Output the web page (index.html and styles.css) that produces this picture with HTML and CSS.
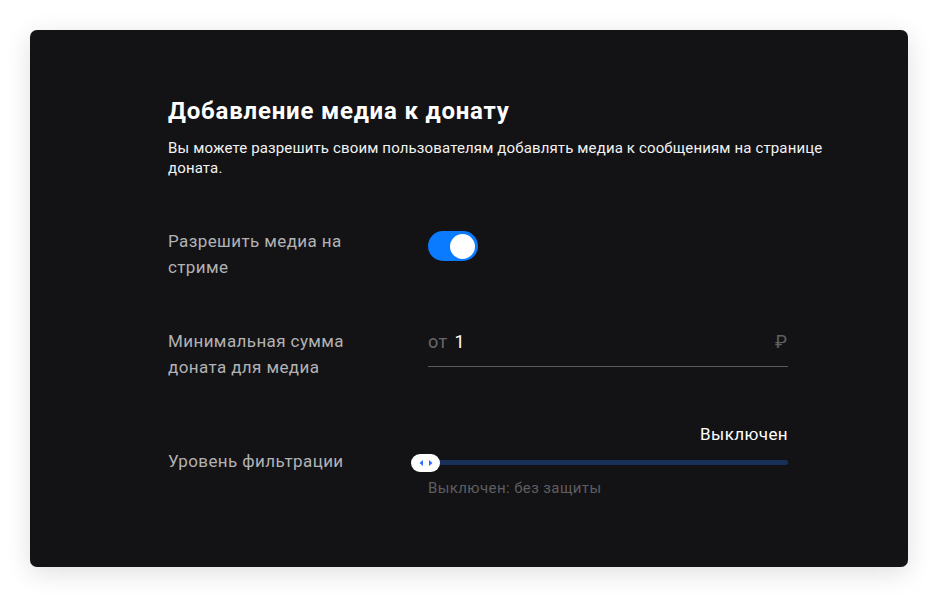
FILE: index.html
```html
<!DOCTYPE html>
<html lang="ru">
<head>
<meta charset="utf-8">
<title>Добавление медиа к донату</title>
<link rel="stylesheet" href="styles.css">
</head>
<body>
<div class="card">
  <div class="content">
    <h1 class="title">Добавление медиа к донату</h1>
    <p class="desc">Вы можете разрешить своим пользователям добавлять медиа к сообщениям на странице доната.</p>

    <div class="row row-toggle">
      <div class="label">Разрешить медиа на стриме</div>
      <div class="control">
        <div class="toggle"><div class="knob"></div></div>
      </div>
    </div>

    <div class="row row-input">
      <div class="label">Минимальная сумма доната для медиа</div>
      <div class="control">
        <div class="input">
          <span class="prefix">от</span>
          <span class="value">1</span>
          <span class="currency">₽</span>
        </div>
      </div>
    </div>

    <div class="row row-slider">
      <div class="label label-slider">Уровень фильтрации</div>
      <div class="control">
        <div class="slider-value">Выключен</div>
        <div class="slider">
          <div class="track"></div>
          <div class="thumb">
            <svg width="16" height="8" viewBox="0 0 16 8">
              <path d="M5 1 L1.5 4 L5 7 Z" fill="#2f6bff"/>
              <path d="M11 1 L14.5 4 L11 7 Z" fill="#2f6bff"/>
            </svg>
          </div>
        </div>
        <div class="hint">Выключен: без защиты</div>
      </div>
    </div>
  </div>
</div>
</body>
</html>
```

FILE: styles.css
```css
* { box-sizing: border-box; }
html, body { margin: 0; padding: 0; background: #ffffff; }
body {
  font-family: Roboto, "Noto Sans", "Liberation Sans", sans-serif;
  padding: 30px;
}
.card {
  width: 878px;
  height: 537px;
  background: #131315;
  border-radius: 7px;
  box-shadow: 0 6px 26px rgba(0, 0, 0, 0.13);
  padding: 65.8px 60px 0 138px;
}
.content { width: 680px; }
.title {
  margin: 0;
  font-size: 24px;
  line-height: 30px;
  font-weight: 700;
  letter-spacing: 0.8px;
  color: #ffffff;
}
.desc {
  margin: 12.4px 0 0;
  font-size: 15px;
  line-height: 20px;
  letter-spacing: 0.14px;
  color: #f2f2f2;
}
.row {
  display: flex;
  align-items: flex-start;
  width: 620px;
}
.label {
  width: 260px;
  font-size: 17px;
  line-height: 26px;
  letter-spacing: 0.4px;
  color: #b2b2b4;
  padding-right: 60px;
}
.control { width: 360px; }
.row-toggle { margin-top: 50px; }
.row-input { margin-top: 47.5px; }
.row-slider { margin-top: 42px; }

.toggle {
  margin-top: 3px;
  width: 50px;
  height: 30px;
  border-radius: 15px;
  background: #0a7bff;
  display: flex;
  align-items: center;
  justify-content: flex-end;
  padding-right: 3px;
}
.knob {
  width: 25px;
  height: 25px;
  border-radius: 50%;
  background: #ffffff;
}

.input {
  display: flex;
  align-items: baseline;
  margin-top: 1.6px;
  padding-bottom: 11px;
  border-bottom: 1px solid #5b5b5e;
  font-size: 18px;
  line-height: 26px;
}
.prefix { color: #68686b; margin-right: 7px; letter-spacing: 0.4px; }
.value { color: #ffffff; flex: 1; }
.currency { color: #5f5f62; margin-right: 1px; }

.label-slider { padding-top: 26.7px; }
.slider-value {
  text-align: right;
  font-size: 17px;
  line-height: 24px;
  letter-spacing: 0.4px;
  color: #ffffff;
}
.slider {
  height: 34.5px;
  display: flex;
  align-items: center;
  margin-left: -17px;
}
.track {
  flex: 1;
  order: 2;
  height: 5px;
  border-radius: 3px;
  background: #163058;
  margin-left: -6px;
}
.thumb {
  order: 1;
  width: 29px;
  height: 18px;
  border-radius: 9px;
  background: #ffffff;
  display: flex;
  align-items: center;
  justify-content: center;
  position: relative;
  z-index: 1;
}
.thumb svg { display: block; }
.hint {
  font-size: 15px;
  line-height: 16px;
  letter-spacing: 0.4px;
  color: #5e5e61;
}
```
